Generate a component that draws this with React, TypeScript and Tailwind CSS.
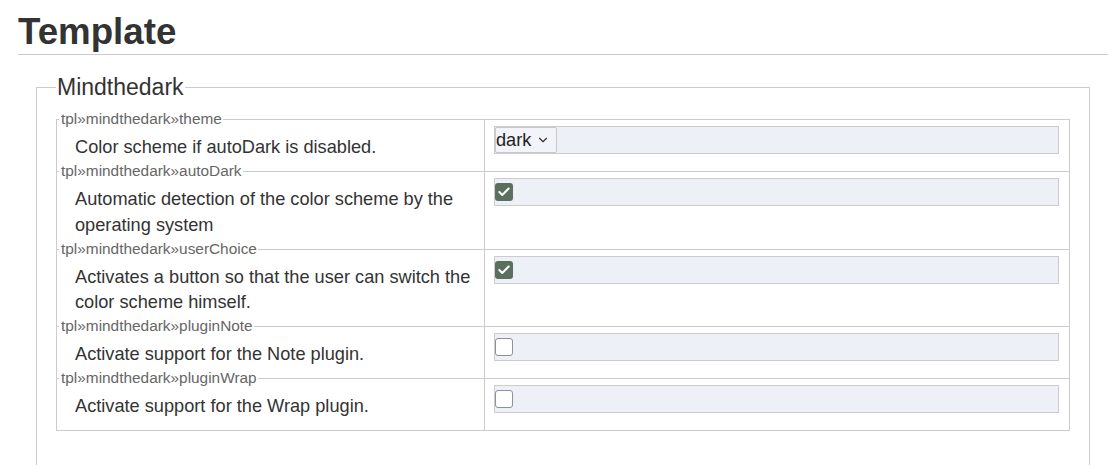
import { Check, ChevronDown } from 'lucide-react'

type Setting = {
  key: string
  desc: string
  kind: 'select' | 'checkbox'
  value: string | boolean
}

const settings: Setting[] = [
  { key: 'tpl»mindthedark»theme', desc: 'Color scheme if autoDark is disabled.', kind: 'select', value: 'dark' },
  { key: 'tpl»mindthedark»autoDark', desc: 'Automatic detection of the color scheme by the operating system', kind: 'checkbox', value: true },
  { key: 'tpl»mindthedark»userChoice', desc: 'Activates a button so that the user can switch the color scheme himself.', kind: 'checkbox', value: true },
  { key: 'tpl»mindthedark»pluginNote', desc: 'Activate support for the Note plugin.', kind: 'checkbox', value: false },
  { key: 'tpl»mindthedark»pluginWrap', desc: 'Activate support for the Wrap plugin.', kind: 'checkbox', value: false },
]

function Box({ checked }: { checked: boolean }) {
  return checked ? (
    <span className="flex h-[18px] w-[18px] items-center justify-center rounded-[3px] bg-[#5a6f5d]">
      <Check size={14} strokeWidth={3.5} className="text-white" />
    </span>
  ) : (
    <span className="block h-[18px] w-[18px] rounded-[3px] border border-[#8f8f9d] bg-white" />
  )
}

export default function App() {
  return (
    <div className="min-h-[465px] bg-white pl-[18px] pr-[5px] font-['Liberation_Sans',Arial,sans-serif] text-[#333]">
      <h1 className="mt-[10px] border-b border-[#ccc] pb-[1px] text-[36.7px] font-bold leading-[43px]">Template</h1>

      <fieldset className="mt-[19px] ml-[18px] mr-[18px] border border-[#ccc] px-[19px] pb-[40px]">
        <legend className="px-[1px] text-[23px] leading-[26px]">Mindthedark</legend>

        <table className="mt-[19px] w-full border-collapse">
          <tbody>
            {settings.map((s) => (
              <tr key={s.key} className="border border-[#ccc]">
                <td className="relative w-[428px] border-r border-[#ccc] pt-[15px] pb-[10.5px] pl-[18px] pr-[10px] align-top text-[18.2px] leading-[25.5px]">
                  <span className="absolute top-[-10px] left-[2px] bg-white pl-[2px] pr-[1px] text-[15.4px] leading-[18px] text-[#666]">
                    {s.key}
                  </span>
                  {s.desc}
                </td>
                <td className="pt-[6px] pl-[9px] pr-[10px] align-top">
                  <div className="flex h-[28px] items-center border border-[#ccc] bg-[#eef0f8]">
                    {s.kind === 'select' ? (
                      <span className="flex h-[26px] items-center gap-[5px] rounded-[2px] border border-[#c8c8cc] bg-[#f3f4f9] pl-0 pr-[6px] text-[18.2px] leading-[22px] text-[#222]">
                        dark
                        <ChevronDown size={14} strokeWidth={2} className="text-[#333]" />
                      </span>
                    ) : (
                      <Box checked={s.value as boolean} />
                    )}
                  </div>
                </td>
              </tr>
            ))}
          </tbody>
        </table>
      </fieldset>
    </div>
  )
}
